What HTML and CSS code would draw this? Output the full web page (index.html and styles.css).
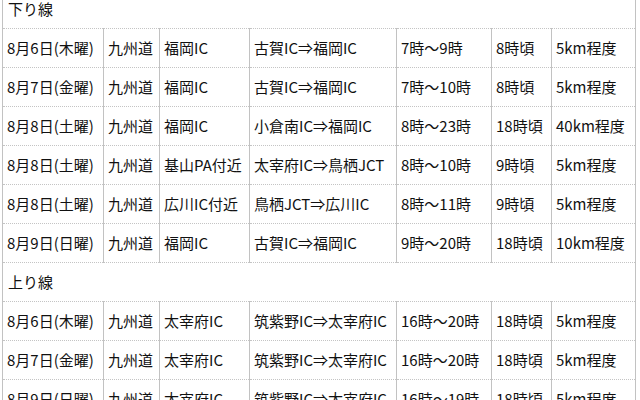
FILE: index.html
```html
<!DOCTYPE html>
<html lang="ja">
<head>
<meta charset="utf-8">
<link rel="stylesheet" href="styles.css">
</head>
<body>
<table class="jam">
<colgroup>
<col class="c-date"><col class="c-road"><col class="c-point"><col class="c-sect"><col class="c-time"><col class="c-peak"><col class="c-len">
</colgroup>
<tbody>
<tr class="sec"><td colspan="7">下り線</td></tr>
<tr><td>8月6日(木曜)</td><td>九州道</td><td>福岡IC</td><td>古賀IC⇒福岡IC</td><td>7時〜9時</td><td>8時頃</td><td>5km程度</td></tr>
<tr><td>8月7日(金曜)</td><td>九州道</td><td>福岡IC</td><td>古賀IC⇒福岡IC</td><td>7時〜10時</td><td>8時頃</td><td>5km程度</td></tr>
<tr><td>8月8日(土曜)</td><td>九州道</td><td>福岡IC</td><td>小倉南IC⇒福岡IC</td><td>8時〜23時</td><td>18時頃</td><td>40km程度</td></tr>
<tr><td>8月8日(土曜)</td><td>九州道</td><td>基山PA付近</td><td>太宰府IC⇒鳥栖JCT</td><td>8時〜10時</td><td>9時頃</td><td>5km程度</td></tr>
<tr><td>8月8日(土曜)</td><td>九州道</td><td>広川IC付近</td><td>鳥栖JCT⇒広川IC</td><td>8時〜11時</td><td>9時頃</td><td>5km程度</td></tr>
<tr><td>8月9日(日曜)</td><td>九州道</td><td>福岡IC</td><td>古賀IC⇒福岡IC</td><td>9時〜20時</td><td>18時頃</td><td>10km程度</td></tr>
<tr class="sec"><td colspan="7">上り線</td></tr>
<tr><td>8月6日(木曜)</td><td>九州道</td><td>太宰府IC</td><td>筑紫野IC⇒太宰府IC</td><td>16時〜20時</td><td>18時頃</td><td>5km程度</td></tr>
<tr><td>8月7日(金曜)</td><td>九州道</td><td>太宰府IC</td><td>筑紫野IC⇒太宰府IC</td><td>16時〜20時</td><td>18時頃</td><td>5km程度</td></tr>
<tr><td>8月9日(日曜)</td><td>九州道</td><td>太宰府IC</td><td>筑紫野IC⇒太宰府IC</td><td>16時〜19時</td><td>18時頃</td><td>5km程度</td></tr>
</tbody>
</table>
</body>
</html>
```
FILE: styles.css
```css
html, body {
  margin: 0;
  padding: 0;
  background: #fff;
}
body {
  font-family: "Noto Sans CJK JP", "Noto Sans", sans-serif;
  font-size: 15px;
  color: #111;
  overflow: hidden;
}
.jam {
  margin: -11px 0 0 2px;
  border-collapse: collapse;
  table-layout: fixed;
  width: 633px;
}
.c-date { width: 101px; }
.c-road { width: 56px; }
.c-point { width: 90px; }
.c-sect { width: 147px; }
.c-time { width: 95px; }
.c-peak { width: 60px; }
.c-len { width: 84px; }
.jam td {
  padding: 9px 3px 9px 4px;
  line-height: 20px;
  height: 20px;
  white-space: nowrap;
  overflow: hidden;
  border-top: 1px dotted #c4c4c4;
  border-bottom: 1px dotted #c4c4c4;
  border-left: 1px solid #c2c2c2;
  border-right: 1px solid #c2c2c2;
}
.sec td {
  padding-left: 5px;
}
```
